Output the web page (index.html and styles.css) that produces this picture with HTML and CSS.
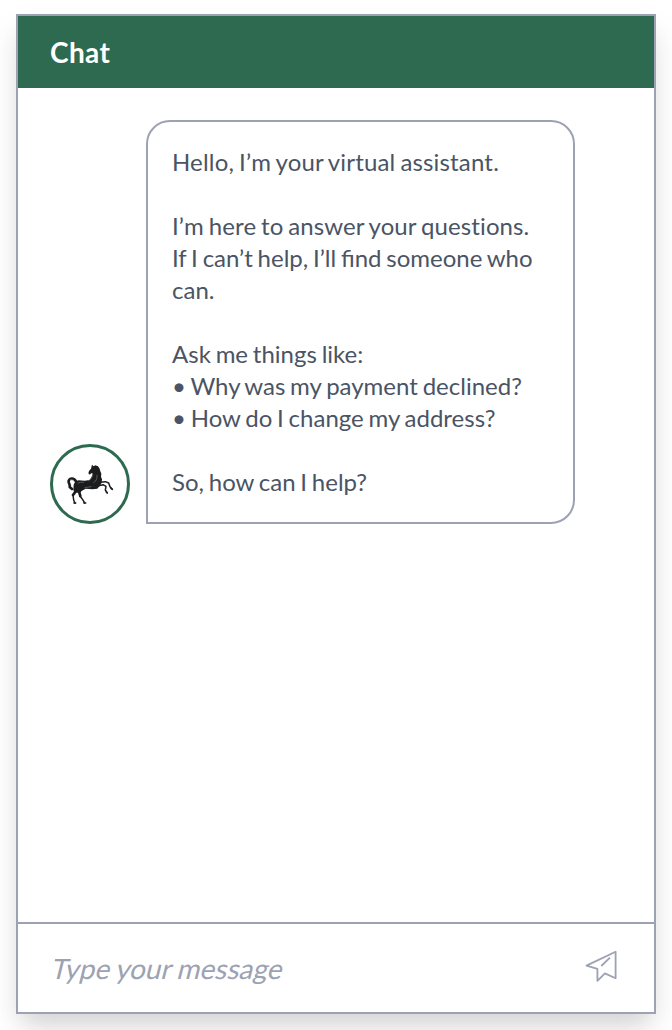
FILE: index.html
```html
<!DOCTYPE html>
<html lang="en">
<head>
<meta charset="utf-8">
<title>Chat</title>
<link rel="stylesheet" href="styles.css">
</head>
<body>
<main class="chat">
  <header class="chat-header"><h1 class="chat-title">Chat</h1></header>
  <section class="messages">
    <div class="avatar">
      <svg class="horse" viewBox="0 0 156 144" aria-hidden="true">
        <path class="tail" d="M36 64C30 53 18 53 14 62C12 70 20 74 17 81L24 87"/>
        <path class="coat" d="M84 14L89 19L94 16L102 19L107 26L109 34L112 41L111 50L114 58L113 68L107 78L100 86L85 88L65 86L54 92L44 98L33 98L28 90L29 74L34 64L44 61L62 62L77 60L83 50L86 40L82 40L77 44L73 40L75 33L81 26Z"/>
        <path class="thigh" d="M35 88L33 97L27 105M49 88L46 98L49 108"/>
        <path class="leg" d="M27 105L29 120L33 130M48 108L56 119L62 129M108 67L124 65L134 69L138 80L144 86M104 77L117 74L126 79L124 90L129 98"/>
        <path class="hoof" d="M30 129h5M60 129h5M141 85l4 3M127 96l3 3"/>
        <path class="shine" d="M87 45q-3 13-14 18M99 46q2 14-10 22M42 69q6-4 17-2M63 83l18-3M19 59q9-2 13 6"/>
      </svg>
    </div>
    <div class="bubble"><span class="greeting">Hello, I’m your virtual assistant.</span>

<span class="intro">I’m here to answer your questions.</span>
If I can’t help, I’ll find someone who can.

Ask me things like:
• Why was my payment declined?
• How do I change my address?

So, how can I help?</div>
  </section>
  <footer class="composer">
    <input class="composer-input" type="text" placeholder="Type your message" aria-label="Message">
    <button class="send" aria-label="Send">
      <svg class="send-icon" viewBox="0 0 34 34"><path d="M2.5 15.6L31.6 1.7v26.5L20.9 23.4l-7.5 7.4V18.9zM17.3 16l8.6-8.3"/></svg>
    </button>
  </footer>
</main>
</body>
</html>
```
FILE: styles.css
```css
* { box-sizing: border-box; }
body {
  margin: 0;
  padding: 14px 16px 16px;
  height: 1030px;
  overflow: hidden;
  background: #fff;
  font-family: Lato, sans-serif;
}
.chat {
  display: flex;
  flex-direction: column;
  height: 1000px;
  border: 2px solid #9da2b3;
  background: #fff;
  box-shadow: 0 16px 24px -8px rgba(0, 0, 0, 0.12), 0 14px 30px rgba(0, 0, 0, 0.08);
}
.chat-header {
  display: flex;
  align-items: center;
  height: 72px;
  padding: 0 32px;
  background: #2d6a4f;
}
.chat-title {
  margin: 0;
  color: #fff;
  font-size: 28px;
  font-weight: 700;
  line-height: 32px;
  letter-spacing: 0.4px;
}
.messages {
  display: flex;
  flex: 1;
  align-items: flex-start;
  gap: 16px;
  padding: 32px;
}
.avatar {
  display: flex;
  align-items: center;
  justify-content: center;
  width: 80px;
  height: 80px;
  margin-top: 324px;
  border: 3px solid #2d6a4f;
  border-radius: 50%;
}
.horse { width: 52px; height: 48px; flex: none; }
.coat { fill: #1b1c1e; }
.tail, .thigh, .leg, .hoof, .shine {
  fill: none;
  stroke: #1b1c1e;
  stroke-linejoin: round;
  stroke-linecap: round;
}
.tail { stroke-width: 8; }
.thigh { stroke-width: 8; }
.leg { stroke-width: 4.5; }
.hoof { stroke-width: 5; }
.shine { stroke: #74777a; stroke-width: 2; }
.bubble {
  width: 429px;
  padding: 24px;
  border: 2px solid #9da2b3;
  border-radius: 24px 24px 24px 0;
  color: #4a5465;
  font-size: 24px;
  line-height: 32px;
  white-space: pre-wrap;
  word-spacing: -1.35px;
}
.greeting { letter-spacing: 0.17px; }
.intro { letter-spacing: 0.1px; }
.composer {
  display: flex;
  align-items: center;
  height: 90px;
  padding: 0 36px 2px 32px;
  border-top: 2px solid #9da2b3;
}
.composer-input {
  flex: 1;
  min-width: 0;
  padding: 0;
  border: 0;
  outline: 0;
  background: none;
  font: 28px/34px Lato, sans-serif;
  word-spacing: -0.8px;
  transform: translateY(1px) skewX(-14deg);
  transform-origin: 0 27px;
}
.composer-input::placeholder { color: #9da2b3; opacity: 1; }
.send {
  display: flex;
  padding: 0;
  border: 0;
  background: none;
}
.send-icon {
  width: 34px;
  height: 34px;
  fill: none;
  stroke: #9da2b3;
  stroke-width: 1.8;
  stroke-linejoin: round;
}
```
